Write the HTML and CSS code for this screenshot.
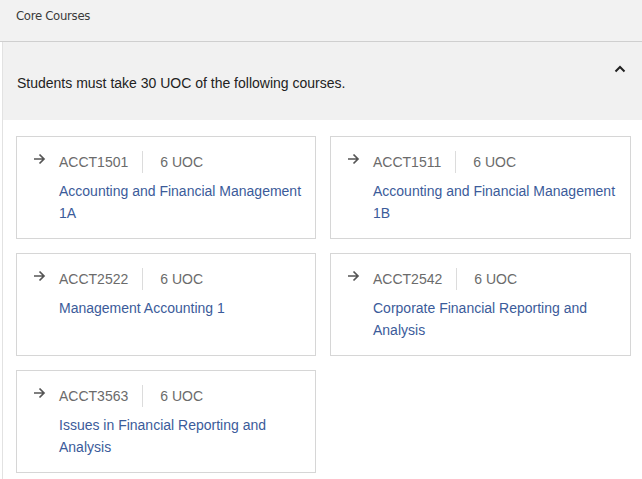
FILE: index.html
```html
<!DOCTYPE html>
<html>
<head>
<meta charset="utf-8">
<link rel="stylesheet" href="styles.css">
</head>
<body>
<div class="section">
  <div class="header">Core Courses</div>
  <div class="content">
    <div class="panel">
      <p class="desc">Students must take 30 UOC of the following courses.</p>
      <svg class="chevron" width="12" height="8" viewBox="0 0 12 8"><path d="M1.5 6.5 L6 2 L10.5 6.5" fill="none" stroke="#222" stroke-width="2"/></svg>
    </div>
    <div class="grid">
      <div class="card">
        <div class="meta"><svg class="arrow" width="13" height="12" viewBox="0 0 13 12"><path d="M1 6 H11 M6.5 1.5 L11 6 L6.5 10.5" fill="none" stroke="#555" stroke-width="1.7"/></svg><span class="code">ACCT1501</span><span class="sep"></span><span class="uoc">6 UOC</span></div>
        <div class="title">Accounting and Financial Management 1A</div>
      </div>
      <div class="card">
        <div class="meta"><svg class="arrow" width="13" height="12" viewBox="0 0 13 12"><path d="M1 6 H11 M6.5 1.5 L11 6 L6.5 10.5" fill="none" stroke="#555" stroke-width="1.7"/></svg><span class="code">ACCT1511</span><span class="sep"></span><span class="uoc">6 UOC</span></div>
        <div class="title">Accounting and Financial Management 1B</div>
      </div>
      <div class="card">
        <div class="meta"><svg class="arrow" width="13" height="12" viewBox="0 0 13 12"><path d="M1 6 H11 M6.5 1.5 L11 6 L6.5 10.5" fill="none" stroke="#555" stroke-width="1.7"/></svg><span class="code">ACCT2522</span><span class="sep"></span><span class="uoc">6 UOC</span></div>
        <div class="title">Management Accounting 1</div>
      </div>
      <div class="card">
        <div class="meta"><svg class="arrow" width="13" height="12" viewBox="0 0 13 12"><path d="M1 6 H11 M6.5 1.5 L11 6 L6.5 10.5" fill="none" stroke="#555" stroke-width="1.7"/></svg><span class="code">ACCT2542</span><span class="sep"></span><span class="uoc">6 UOC</span></div>
        <div class="title">Corporate Financial Reporting and Analysis</div>
      </div>
      <div class="card">
        <div class="meta"><svg class="arrow" width="13" height="12" viewBox="0 0 13 12"><path d="M1 6 H11 M6.5 1.5 L11 6 L6.5 10.5" fill="none" stroke="#555" stroke-width="1.7"/></svg><span class="code">ACCT3563</span><span class="sep"></span><span class="uoc">6 UOC</span></div>
        <div class="title">Issues in Financial Reporting and Analysis</div>
      </div>
    </div>
  </div>
</div>
</body>
</html>
```
FILE: styles.css
```css
html, body { margin: 0; padding: 0; background: #fff; }
body { font-family: "Liberation Sans", Arial, sans-serif; }
.section { width: 642px; }
.header {
  height: 42px;
  box-sizing: border-box;
  background: #f2f2f2;
  border-bottom: 1px solid #cfcfcf;
  padding: 8px 0 0 16px;
  font-family: "DejaVu Sans", sans-serif;
  font-stretch: condensed;
  font-size: 13px;
  line-height: 16px;
  color: #3a3a3a;
  letter-spacing: -0.3px;
}
.content {
  margin-left: 2px;
  border-left: 1px solid #e2e2e2;
  padding-bottom: 14px;
}
.panel {
  height: 78px;
  background: #f1f1f1;
  display: flex;
  align-items: center;
  justify-content: space-between;
  padding: 0 16px 0 14px;
}
.desc { margin: 4px 0 0; font-size: 14px; color: #222; }
.chevron { margin-top: -24px; }
.grid {
  display: grid;
  grid-template-columns: 300px 301px;
  column-gap: 14px;
  row-gap: 14px;
  padding: 16px 0 0 13px;
}
.card {
  height: 103px;
  box-sizing: border-box;
  border: 1px solid #d6d6d6;
  padding: 14px 12px 0 16px;
}
.meta { display: flex; align-items: center; height: 22px; }
.arrow { margin-right: 13px; margin-top: -6px; }
.code, .uoc { font-size: 14px; color: #6b6b6b; }
.sep { width: 1px; height: 22px; background: #dcdcdc; margin: 0 17px 0 14px; }
.title {
  margin: 7px 0 0 26px;
  font-size: 14px;
  line-height: 22px;
  color: #3b5b9a;
}
```
